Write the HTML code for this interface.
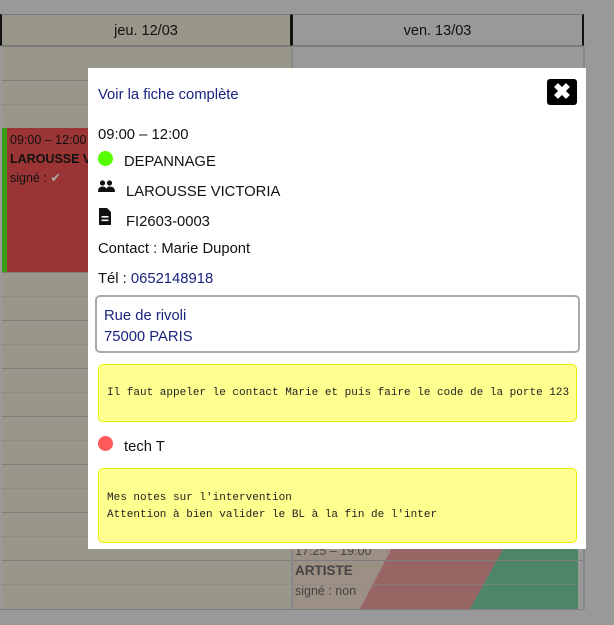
<!DOCTYPE html>
<html><head><meta charset="utf-8"><style>
*{box-sizing:border-box;margin:0;padding:0}
body{width:614px;height:625px;background:#999;font-family:"Liberation Sans",sans-serif;position:relative;overflow:hidden}
.abs{position:absolute}
.col1{left:2px;top:14px;width:290px;height:596px;background:#98978a}
.col2{left:292px;top:14px;width:292px;height:596px;background:#999}
.hd{top:14px;height:32px;border-left:2px solid #111;border-right:2px solid #111;border-top:1px solid #777;border-bottom:1px solid #777;text-align:center;line-height:32px;font-size:14.5px;color:#111}
.sl{left:2px;width:582px;height:0;border-top:1px solid #7d7d7d}
.dl{left:2px;width:582px;height:0;border-top:1px dotted #888}
.modal{left:88px;top:68px;width:498px;height:481px;background:#fff}
.m{position:absolute;left:10px;font-size:14.8px;color:#111}
.note{position:absolute;left:10px;width:479px;background:#ffff8f;border:1px solid #eded00;border-radius:5px;font-family:"Liberation Mono",monospace;font-size:11px;color:#222}
</style></head><body>
<div class="abs col1"></div><div class="abs col2"></div>
<svg class="abs" style="left:293px;top:540px" width="285" height="69"><rect width="285" height="69" fill="#9c8f84"/><polygon points="103,0 215,0 177,69 67,69" fill="#986565"/><polygon points="215,0 285,0 285,69 177,69" fill="#4c8568"/></svg>
<div class="abs" style="left:295px;top:541px;font-size:12.5px;color:#444;line-height:20px">
<div>17:25 – 19:00</div><div style="font-weight:bold;font-size:13.5px">ARTISTE</div><div>signé : non</div></div>
<div class="abs sl" style="top:46px"></div>
<div class="abs sl" style="top:80px"></div>
<div class="abs dl" style="top:104px"></div>
<div class="abs sl" style="top:128px"></div>
<div class="abs dl" style="top:152px"></div>
<div class="abs sl" style="top:176px"></div>
<div class="abs dl" style="top:200px"></div>
<div class="abs sl" style="top:224px"></div>
<div class="abs dl" style="top:248px"></div>
<div class="abs sl" style="top:272px"></div>
<div class="abs dl" style="top:296px"></div>
<div class="abs sl" style="top:320px"></div>
<div class="abs dl" style="top:344px"></div>
<div class="abs sl" style="top:368px"></div>
<div class="abs dl" style="top:392px"></div>
<div class="abs sl" style="top:416px"></div>
<div class="abs dl" style="top:440px"></div>
<div class="abs sl" style="top:464px"></div>
<div class="abs dl" style="top:488px"></div>
<div class="abs sl" style="top:512px"></div>
<div class="abs dl" style="top:536px"></div>
<div class="abs sl" style="top:560px"></div>
<div class="abs dl" style="top:584px"></div>
<div class="abs" style="left:0;top:609px;width:585px;border-top:1px solid #7d7d7d"></div>
<div class="abs" style="left:291px;top:46px;width:2px;height:564px;background:#888"></div>
<div class="abs" style="left:583px;top:46px;width:2px;height:564px;background:#888"></div>
<div class="abs hd" style="left:0;width:292px">jeu. 12/03</div>
<div class="abs hd" style="left:291px;width:293px">ven. 13/03</div>
<div class="abs" style="left:2px;top:128px;width:90px;height:144px;background:#9b3535;border-left:5px solid #3a9a10;font-size:12.5px;color:#111;padding:3px 0 0 3px;line-height:19px;white-space:nowrap;overflow:hidden">09:00 – 12:00<br><b>LAROUSSE V</b><br>signé : <span style="color:#aaa">✔</span></div>
<div class="abs modal">
<div class="m" style="top:19px;color:#1a237e">Voir la fiche complète</div>
<div class="abs" style="left:459px;top:11px;width:30px;height:26px;background:#000;border-radius:3px;color:#fff;font-size:22px;font-weight:bold;text-align:center;line-height:26px">✖</div>
<div class="m" style="top:59px">09:00 – 12:00</div>
<div class="abs" style="left:10px;top:83px;width:15px;height:15px;border-radius:50%;background:#55ff00"></div>
<div class="m" style="left:36px;top:86px">DEPANNAGE</div>
<svg class="abs" style="left:10px;top:112px" width="17" height="13" viewBox="0 0 17 13"><circle cx="4.5" cy="3" r="2.6" fill="#111"/><circle cx="11.5" cy="3" r="2.6" fill="#111"/><path d="M0 12 Q0 6.5 4.5 6.5 Q9 6.5 9 12Z M8 12 Q8 6.5 11.5 6.5 Q17 6.5 17 12Z" fill="#111"/></svg>
<div class="m" style="left:38px;top:116px">LAROUSSE VICTORIA</div>
<svg class="abs" style="left:11px;top:140px" width="12" height="17" viewBox="0 0 12 17"><path d="M0 0H8L12 4V17H0Z" fill="#111"/><rect x="2.5" y="8" width="7" height="1.6" fill="#fff"/><rect x="2.5" y="11.5" width="7" height="1.6" fill="#fff"/></svg>
<div class="m" style="left:38px;top:146px">FI2603-0003</div>
<div class="m" style="top:173px">Contact : Marie Dupont</div>
<div class="m" style="top:203px">Tél : <span style="color:#1a237e">0652148918</span></div>
<div class="abs" style="left:7px;top:227px;width:485px;height:58px;border:2px solid #aaa;border-radius:5px;padding:9px 0 0 7px;font-size:14.8px;line-height:21px;color:#1a237e">Rue de rivoli<br>75000 PARIS</div>
<div class="note" style="top:296px;height:58px;line-height:56px;padding-left:8px">Il faut appeler le contact Marie et puis faire le code de la porte 123</div>
<div class="abs" style="left:10px;top:368px;width:15px;height:15px;border-radius:50%;background:#ff5a5a"></div>
<div class="m" style="left:36px;top:371px">tech T</div>
<div class="note" style="top:400px;height:75px;padding:21px 0 0 8px;line-height:17px">Mes notes sur l'intervention<br>Attention à bien valider le BL à la fin de l'inter</div>
</div>
</body></html>
